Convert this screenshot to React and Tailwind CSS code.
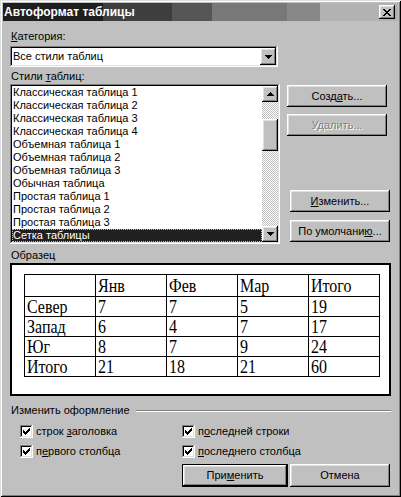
import React from "react";

const raised =
  "shadow-[inset_-1px_-1px_#000,inset_1px_1px_#fff,inset_-2px_-2px_#808080,inset_2px_2px_#dfdfdf]";
const sunken =
  "shadow-[inset_-1px_-1px_#fff,inset_1px_1px_#808080,inset_-2px_-2px_#dfdfdf,inset_2px_2px_#000]";

const styles = [
  "Классическая таблица 1",
  "Классическая таблица 2",
  "Классическая таблица 3",
  "Классическая таблица 4",
  "Объемная таблица 1",
  "Объемная таблица 2",
  "Объемная таблица 3",
  "Обычная таблица",
  "Простая таблица 1",
  "Простая таблица 2",
  "Простая таблица 3",
  "Сетка таблицы",
];

const sample = [
  ["", "Янв", "Фев", "Мар", "Итого"],
  ["Север", "7", "7", "5", "19"],
  ["Запад", "6", "4", "7", "17"],
  ["Юг", "8", "7", "9", "24"],
  ["Итого", "21", "18", "21", "60"],
];

const Arrow = ({ up }) => (
  <svg width="7" height="4" viewBox="0 0 7 4" shapeRendering="crispEdges">
    {up ? (
      <g fill="#000">
        <rect x="3" y="0" width="1" height="1" />
        <rect x="2" y="1" width="3" height="1" />
        <rect x="1" y="2" width="5" height="1" />
        <rect x="0" y="3" width="7" height="1" />
      </g>
    ) : (
      <g fill="#000">
        <rect x="0" y="0" width="7" height="1" />
        <rect x="1" y="1" width="5" height="1" />
        <rect x="2" y="2" width="3" height="1" />
        <rect x="3" y="3" width="1" height="1" />
      </g>
    )}
  </svg>
);

const Check = ({ label }) => (
  <div className="flex items-center h-[13px]">
    <div className={`w-[13px] h-[13px] bg-white ${sunken}`}>
      <svg width="13" height="13" viewBox="0 0 13 13" shapeRendering="crispEdges">
        <g fill="#000">
          <rect x="9" y="3" width="1" height="1" />
          <rect x="8" y="4" width="2" height="1" />
          <rect x="3" y="5" width="1" height="1" />
          <rect x="7" y="5" width="3" height="1" />
          <rect x="3" y="6" width="2" height="1" />
          <rect x="6" y="6" width="3" height="1" />
          <rect x="3" y="7" width="5" height="1" />
          <rect x="4" y="8" width="3" height="1" />
          <rect x="5" y="9" width="1" height="1" />
        </g>
      </svg>
    </div>
    <span className="ml-[3px]">{label}</span>
  </div>
);

export default function App() {
  return (
    <div className="w-[401px] h-[497px] bg-[#c0c0c0] p-[3px] flex flex-col text-[11px] leading-[13px] text-black font-['Liberation_Sans',Arial,sans-serif] shadow-[inset_1px_1px_#dfdfdf,inset_-1px_-1px_#000,inset_2px_2px_#fff,inset_-2px_-2px_#808080]">
      {/* title bar */}
      <div className="h-[18px] flex items-center justify-between pl-[1px] pr-[3px] bg-[image:linear-gradient(to_right,#1e1e1e_0px,#1e1e1e_100px,#3e3e3e_100px,#3e3e3e_169px,#565656_169px,#565656_209px,#787878_209px,#787878_284px,#888_284px,#888_317px,#b2b2b2_317px,#b2b2b2_100%)]">
        <span className="text-white font-bold text-[12px]">Автоформат таблицы</span>
        <div className={`w-[16px] h-[14px] bg-[#c0c0c0] ${raised} flex items-center justify-center`}>
          <svg width="8" height="7" viewBox="0 0 8 7" shapeRendering="crispEdges">
            <g fill="#000">
              <rect x="0" y="0" width="2" height="1" />
              <rect x="6" y="0" width="2" height="1" />
              <rect x="1" y="1" width="2" height="1" />
              <rect x="5" y="1" width="2" height="1" />
              <rect x="2" y="2" width="4" height="1" />
              <rect x="3" y="3" width="2" height="1" />
              <rect x="2" y="4" width="4" height="1" />
              <rect x="1" y="5" width="2" height="1" />
              <rect x="5" y="5" width="2" height="1" />
              <rect x="0" y="6" width="2" height="1" />
              <rect x="6" y="6" width="2" height="1" />
            </g>
          </svg>
        </div>
      </div>

      <div className="flex-1 px-[7px] flex flex-col">
        <div className="mt-[9px] pl-[1px]">
          <u>К</u>атегория:
        </div>

        <div className={`mt-[3px] w-[268px] h-[21px] bg-white ${sunken} p-[2px] flex`}>
          <div className="flex-1 pl-[1px] flex items-center">Все стили таблиц</div>
          <div className={`w-[16px] h-[17px] bg-[#c0c0c0] ${raised} flex items-center justify-center`}>
            <Arrow />
          </div>
        </div>

        <div className="mt-[3px] pl-[1px]">
          Стили <u>т</u>аблиц:
        </div>

        <div className="mt-[1px] flex">
          <div className={`w-[270px] h-[160px] bg-white ${sunken} p-[2px] flex`}>
            <div className="flex-1 flex flex-col">
              {styles.map((s, i) =>
                i === styles.length - 1 ? (
                  <div
                    key={s}
                    className="h-[13px] pl-[1px] bg-[#202020] text-white outline-1 outline-dotted outline-[#c0c0c0] -outline-offset-1"
                  >
                    {s}
                  </div>
                ) : (
                  <div key={s} className="h-[13px] pl-[1px]">
                    {s}
                  </div>
                )
              )}
            </div>
            <div className="w-[16px] flex flex-col">
              <div className={`h-[16px] bg-[#c0c0c0] ${raised} flex items-center justify-center`}>
                <Arrow up />
              </div>
              <div className="flex-1 flex flex-col bg-[image:repeating-conic-gradient(#fff_0%_25%,#c0c0c0_0%_50%)] bg-[length:2px_2px]">
                <div className="h-[17px]" />
                <div className={`h-[32px] bg-[#c0c0c0] ${raised}`} />
              </div>
              <div className={`h-[16px] bg-[#c0c0c0] ${raised} flex items-center justify-center`}>
                <Arrow />
              </div>
            </div>
          </div>

          <div className="ml-[7px] h-[160px] flex flex-col pt-[1px] pb-[2px]">
            <div className={`w-[100px] h-[22px] bg-[#c0c0c0] ${raised} flex items-center justify-center`}>
              <span>
                Созд<u>а</u>ть...
              </span>
            </div>
            <div className={`mt-[7px] w-[100px] h-[22px] bg-[#c0c0c0] ${raised} flex items-center justify-center text-[#808080] [text-shadow:1px_1px_0_#fff]`}>
              Удалить...
            </div>
            <div className="mt-auto ml-[3px] flex flex-col gap-[8px]">
              <div className={`w-[100px] h-[22px] bg-[#c0c0c0] ${raised} flex items-center justify-center`}>
                <span>
                  <u>И</u>зменить...
                </span>
              </div>
              <div className={`w-[100px] h-[22px] bg-[#c0c0c0] ${raised} flex items-center justify-center`}>
                <span>
                  По умолчани<u>ю</u>...
                </span>
              </div>
            </div>
          </div>
        </div>

        <div className="mt-[5px] pl-[1px]">Образец</div>

        <div className="mt-[1px] w-[381px] h-[133px] bg-white border-2 border-black pl-[12px] pt-[9px]">
          <table className="border-collapse font-['Liberation_Serif','Times_New_Roman',serif] text-[16px] leading-[18px]">
            <tbody>
              {sample.map((row, r) => (
                <tr key={r} className={r === 0 ? "h-[22px]" : "h-[20px]"}>
                  {row.map((c, j) => (
                    <td
                      key={j}
                      className="border border-black w-[71px] min-w-[71px] p-0 pl-[2px] align-middle"
                    >
                      <span className="inline-block scale-y-[1.2]">{c}</span>
                    </td>
                  ))}
                </tr>
              ))}
            </tbody>
          </table>
        </div>

        <div className="mt-[8px] flex items-center">
          <span className="pl-[1px]">Изменить оформление</span>
          <div className="ml-[6px] flex-1 border-t border-b border-t-[#808080] border-b-white" />
        </div>

        <div className="mt-[8px] pl-[10px] grid grid-cols-[162px_1fr] gap-y-[7px]">
          <Check
            label={
              <>
                строк <u>з</u>аголовка
              </>
            }
          />
          <Check
            label={
              <>
                п<u>о</u>следней строки
              </>
            }
          />
          <Check
            label={
              <>
                п<u>е</u>рвого столбца
              </>
            }
          />
          <Check
            label={
              <>
                <u>п</u>оследнего столбца
              </>
            }
          />
        </div>

        <div className="mt-[6px] flex pl-[172px]">
          <div className="w-[106px] h-[23px] border border-black">
            <div className={`w-full h-full bg-[#c0c0c0] ${raised} flex items-center justify-center`}>
              <span>
                При<u>м</u>енить
              </span>
            </div>
          </div>
          <div className={`ml-[2px] w-[100px] h-[23px] bg-[#c0c0c0] ${raised} flex items-center justify-center`}>
            Отмена
          </div>
        </div>
      </div>
    </div>
  );
}
